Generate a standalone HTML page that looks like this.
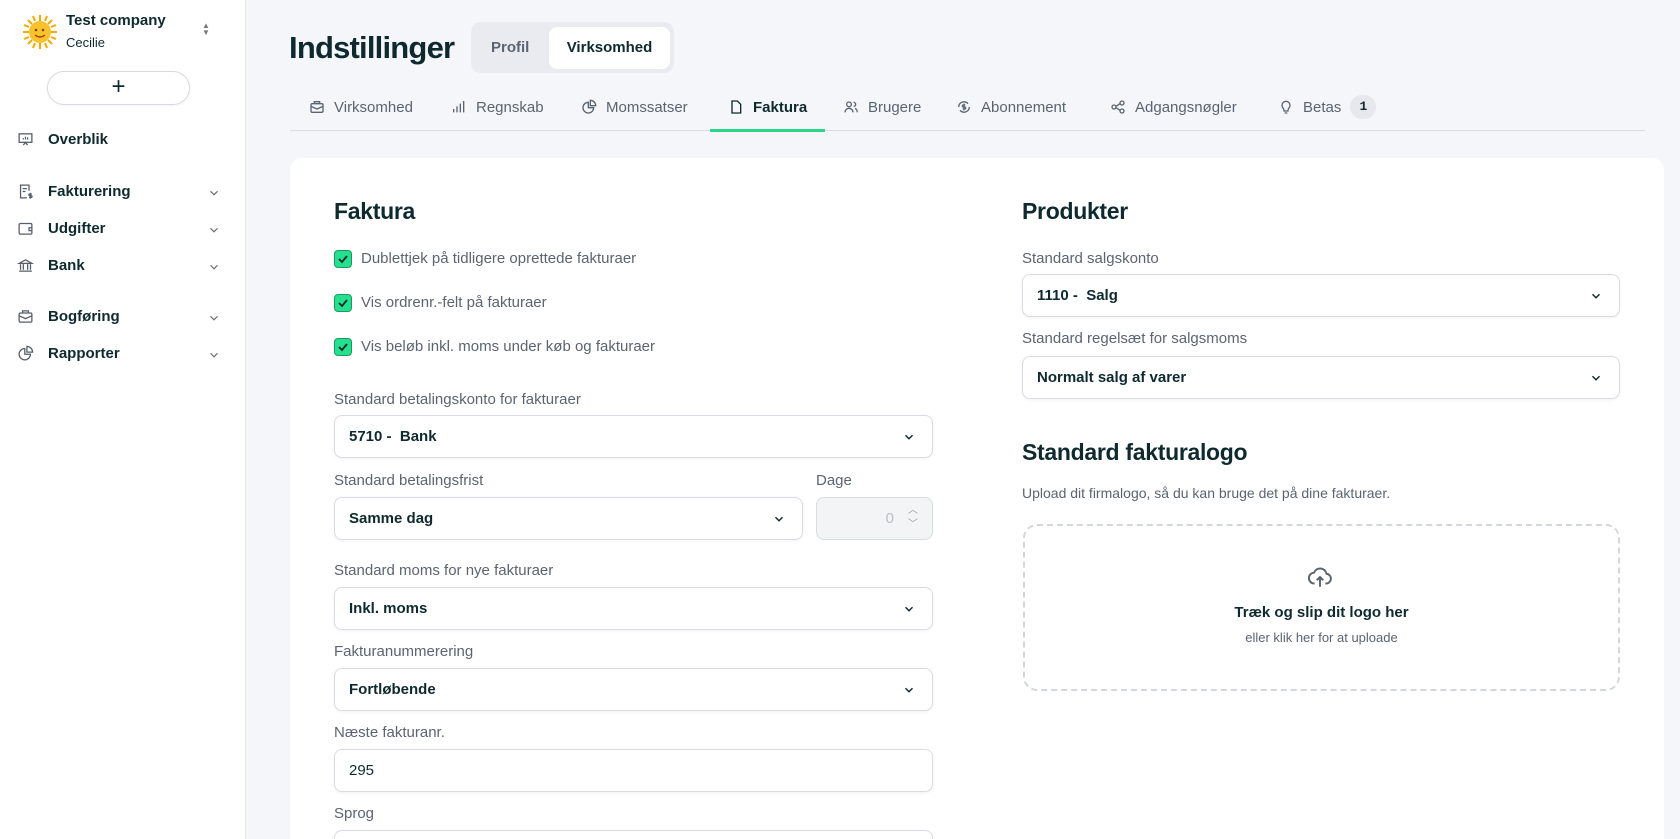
<!DOCTYPE html>
<html><head><meta charset="utf-8"><style>
*{box-sizing:border-box;margin:0;padding:0}
html,body{width:1680px;height:839px;overflow:hidden}
body{background:#f5f6f9;font-family:"Liberation Sans",sans-serif;color:#0e2a2f}
#wrap{position:relative;width:1680px;height:839px;overflow:hidden}
.abs{position:absolute}
.side{left:0;top:0;width:246px;height:839px;background:#fff;border-right:1px solid #e6e8ee}
.nav{position:absolute;left:48px;font-weight:bold;font-size:15px;white-space:nowrap}
.nicon{position:absolute;left:17px;width:17px;height:17px}
.chev{position:absolute;left:207px;width:14px;height:14px}
.tab{position:absolute;top:95px;height:24px;font-size:15px;color:#5a6470;white-space:nowrap;display:flex;align-items:center;gap:9px}
.tab svg{width:16px;height:16px}
.card{left:290px;top:158px;width:1374px;height:720px;background:#fff;border-radius:12px}
.h2{position:absolute;font-size:23px;font-weight:bold;letter-spacing:-0.3px}
.lbl{position:absolute;font-size:15px;color:#5b6470;white-space:nowrap}
.sel{position:absolute;height:43px;border:1px solid #d9dce2;border-radius:8px;box-shadow:0 1px 3px rgba(0,0,0,.06);font-size:15px;font-weight:bold;padding:0 14px;display:flex;align-items:center;background:#fff}
.sel svg{position:absolute;right:16px;top:14px;width:14px;height:14px}
.cb{position:absolute;left:334px;width:18px;height:18px;background:#25e08f;border:1px solid #1a9a62;border-radius:4px}
.cb svg{position:absolute;left:2px;top:2px;width:12px;height:12px}
.cbl{position:absolute;left:361px;font-size:15px;color:#5b6470;white-space:nowrap}
</style></head><body><div id="wrap">
<div class="abs side"></div>
<svg class="abs" style="left:22px;top:14px" width="36" height="36" viewBox="0 0 36 36"><g stroke="#f2a900" stroke-width="2"><path d="M18 1v6M18 29v6M1 18h6M29 18h6M6 6l4 4M26 26l4 4M30 6l-4 4M6 30l4-4M11 2l2 5M25 2l-2 5M11 34l2-5M25 34l-2-5M2 11l5 2M34 11l-5 2M2 25l5-2M34 25l-5-2"/></g><circle cx="18" cy="18" r="11" fill="#f7c22c"/><circle cx="14" cy="16" r="1.3" fill="#7a4a00"/><circle cx="21" cy="16" r="1.3" fill="#7a4a00"/><path d="M13 21q5 4 10 0" stroke="#a0400a" stroke-width="1.4" fill="none"/></svg>
<div class="abs" style="left:66px;top:12px;font-weight:bold;font-size:15px">Test company</div>
<div class="abs" style="left:66px;top:35px;font-size:13px">Cecilie</div>
<div class="abs" style="left:202px;top:22px;font-size:8px;color:#777;line-height:7px">▲<br>▼</div>
<div class="abs" style="left:47px;top:71px;width:143px;height:34px;border:1px solid #d6d9df;border-radius:17px;box-shadow:0 1px 2px rgba(0,0,0,.05);text-align:center;font-size:24px;line-height:30px;font-weight:300">+</div>

<svg class="nicon" style="top:131px" viewBox="0 0 24 24" fill="none" stroke="#555e6a" stroke-width="1.8"><rect x="3" y="4" width="18" height="12"/><path d="M9 20l3-4 3 4M9 12v-2M12 12V8M15 12v-3"/></svg>
<div class="nav" style="top:131px">Overblik</div>
<svg class="nicon" style="top:183px" viewBox="0 0 24 24" fill="none" stroke="#555e6a" stroke-width="1.8"><path d="M14 21H5V3h12v8M8 8h6M8 12h4"/><path d="M19 14v8M21 15.5h-3a1.2 1.2 0 000 2.5h2a1.2 1.2 0 010 2.5h-3"/></svg>
<div class="nav" style="top:183px">Fakturering</div>
<svg class="nicon" style="top:220px" viewBox="0 0 24 24" fill="none" stroke="#555e6a" stroke-width="1.8"><rect x="3" y="5" width="18" height="15" rx="2"/><path d="M21 11h-4v4h4"/></svg>
<div class="nav" style="top:220px">Udgifter</div>
<svg class="nicon" style="top:257px" viewBox="0 0 24 24" fill="none" stroke="#555e6a" stroke-width="1.8"><path d="M3 9l9-5 9 5H3zM5 10v8M9 10v8M15 10v8M19 10v8M3 20h18"/></svg>
<div class="nav" style="top:257px">Bank</div>
<svg class="nicon" style="top:308px" viewBox="0 0 24 24" fill="none" stroke="#555e6a" stroke-width="1.8"><rect x="3" y="7" width="18" height="13" rx="2"/><path d="M8 7V4h8v3M3 11l9 4 9-4"/></svg>
<div class="nav" style="top:308px">Bogføring</div>
<svg class="nicon" style="top:345px" viewBox="0 0 24 24" fill="none" stroke="#555e6a" stroke-width="1.8"><path d="M11 5a8 8 0 108 8h-8z"/><path d="M14 2a8 8 0 018 8h-8z"/></svg>
<div class="nav" style="top:345px">Rapporter</div>
<svg class="chev" style="top:186px" viewBox="0 0 24 24" fill="none" stroke="#666" stroke-width="2"><path d="M6 9l6 6 6-6"/></svg>
<svg class="chev" style="top:223px" viewBox="0 0 24 24" fill="none" stroke="#666" stroke-width="2"><path d="M6 9l6 6 6-6"/></svg>
<svg class="chev" style="top:260px" viewBox="0 0 24 24" fill="none" stroke="#666" stroke-width="2"><path d="M6 9l6 6 6-6"/></svg>
<svg class="chev" style="top:311px" viewBox="0 0 24 24" fill="none" stroke="#666" stroke-width="2"><path d="M6 9l6 6 6-6"/></svg>
<svg class="chev" style="top:348px" viewBox="0 0 24 24" fill="none" stroke="#666" stroke-width="2"><path d="M6 9l6 6 6-6"/></svg>

<div class="abs" style="left:289px;top:30px;font-size:31px;font-weight:bold;letter-spacing:-0.8px">Indstillinger</div>
<div class="abs" style="left:471px;top:22px;width:203px;height:51px;background:#e9ebf0;border-radius:10px"></div>
<div class="abs" style="left:491px;top:39px;font-size:15px;font-weight:bold;color:#5b6470">Profil</div>
<div class="abs" style="left:549px;top:27px;width:121px;height:42px;background:#fff;border-radius:8px;font-size:15px;font-weight:bold;text-align:center;line-height:42px">Virksomhed</div>

<div class="tab" style="left:309px"><svg viewBox="0 0 24 24" fill="none" stroke="#5a6470" stroke-width="2"><rect x="3" y="7" width="18" height="13" rx="2"/><path d="M8 7V4h8v3M3 11l9 4 9-4"/></svg>Virksomhed</div>
<div class="tab" style="left:451px"><svg viewBox="0 0 24 24" fill="none" stroke="#5a6470" stroke-width="2"><path d="M4 20v-5M9 20v-9M14 20V7M19 20V3"/></svg>Regnskab</div>
<div class="tab" style="left:581px"><svg viewBox="0 0 24 24" fill="none" stroke="#5a6470" stroke-width="2"><path d="M11 5a8 8 0 108 8h-8z"/><path d="M14 2a8 8 0 018 8h-8z"/></svg>Momssatser</div>
<div class="tab" style="left:728px;color:#0e2a2f;font-weight:bold"><svg viewBox="0 0 24 24" fill="none" stroke="#0e2a2f" stroke-width="2"><path d="M6 3h8l5 5v13H6z"/></svg>Faktura</div>
<div class="tab" style="left:843px"><svg viewBox="0 0 24 24" fill="none" stroke="#5a6470" stroke-width="2"><circle cx="9" cy="8" r="3.5"/><path d="M3 20a6 6 0 0112 0M16 5a3 3 0 010 6M18 14a5 5 0 013 6"/></svg>Brugere</div>
<div class="tab" style="left:956px"><svg viewBox="0 0 24 24" fill="none" stroke="#5a6470" stroke-width="2"><path d="M4 12a8 8 0 0114-5M20 12a8 8 0 01-14 5"/><path d="M14 9h-3a1.5 1.5 0 000 3h2a1.5 1.5 0 010 3h-3M12 7v10"/></svg>Abonnement</div>
<div class="tab" style="left:1110px"><svg viewBox="0 0 24 24" fill="none" stroke="#5a6470" stroke-width="2"><circle cx="6" cy="12" r="3"/><circle cx="18" cy="6" r="3"/><circle cx="18" cy="18" r="3"/><path d="M9 11l6-4M9 13l6 4"/></svg>Adgangsnøgler</div>
<div class="tab" style="left:1278px"><svg viewBox="0 0 24 24" fill="none" stroke="#5a6470" stroke-width="2"><path d="M9 18h6M10 21h4M8 14a6 6 0 118 0c-1 1-1 2-1 4H9c0-2 0-3-1-4z"/></svg>Betas<span style="display:inline-block;width:26px;height:24px;border-radius:12px;background:#e6e8ed;text-align:center;line-height:24px;font-size:13px;font-weight:bold;color:#0e2a2f;font-family:'Liberation Mono',monospace">1</span></div>
<div class="abs" style="left:290px;top:130px;width:1355px;height:1px;background:#d9dce2"></div>
<div class="abs" style="left:710px;top:129px;width:115px;height:3px;background:#2bd58a"></div>

<div class="abs card"></div>
<div class="h2" style="left:334px;top:198px">Faktura</div>
<div class="cb" style="top:250px"><svg viewBox="0 0 12 12" fill="none" stroke="#0e2a2f" stroke-width="1.8"><path d="M2 6l3 3 5-6"/></svg></div>
<div class="cbl" style="top:250px">Dublettjek på tidligere oprettede fakturaer</div>
<div class="cb" style="top:294px"><svg viewBox="0 0 12 12" fill="none" stroke="#0e2a2f" stroke-width="1.8"><path d="M2 6l3 3 5-6"/></svg></div>
<div class="cbl" style="top:294px">Vis ordrenr.-felt på fakturaer</div>
<div class="cb" style="top:338px"><svg viewBox="0 0 12 12" fill="none" stroke="#0e2a2f" stroke-width="1.8"><path d="M2 6l3 3 5-6"/></svg></div>
<div class="cbl" style="top:338px">Vis beløb inkl. moms under køb og fakturaer</div>

<div class="lbl" style="left:334px;top:391px">Standard betalingskonto for fakturaer</div>
<div class="sel" style="left:334px;top:415px;width:599px">5710 -&nbsp; Bank<svg viewBox="0 0 24 24" fill="none" stroke="#0e2a2f" stroke-width="2.5"><path d="M6 9l6 6 6-6"/></svg></div>
<div class="lbl" style="left:334px;top:472px">Standard betalingsfrist</div>
<div class="lbl" style="left:816px;top:472px">Dage</div>
<div class="sel" style="left:334px;top:497px;width:469px">Samme dag<svg viewBox="0 0 24 24" fill="none" stroke="#0e2a2f" stroke-width="2.5"><path d="M6 9l6 6 6-6"/></svg></div>
<div class="sel" style="left:816px;top:497px;width:117px;background:#f3f4f6;font-weight:normal;color:#b8bcc4;justify-content:flex-end;padding-right:38px;box-shadow:none">0<span style="position:absolute;right:14px;top:6px;font-size:10px;line-height:14px;color:#999">︿<br>﹀</span></div>
<div class="lbl" style="left:334px;top:562px">Standard moms for nye fakturaer</div>
<div class="sel" style="left:334px;top:587px;width:599px">Inkl. moms<svg viewBox="0 0 24 24" fill="none" stroke="#0e2a2f" stroke-width="2.5"><path d="M6 9l6 6 6-6"/></svg></div>
<div class="lbl" style="left:334px;top:643px">Fakturanummerering</div>
<div class="sel" style="left:334px;top:668px;width:599px">Fortløbende<svg viewBox="0 0 24 24" fill="none" stroke="#0e2a2f" stroke-width="2.5"><path d="M6 9l6 6 6-6"/></svg></div>
<div class="lbl" style="left:334px;top:724px">Næste fakturanr.</div>
<div class="sel" style="left:334px;top:749px;width:599px;font-weight:normal">295</div>
<div class="lbl" style="left:334px;top:805px">Sprog</div>
<div class="sel" style="left:334px;top:830px;width:599px"></div>

<div class="h2" style="left:1022px;top:198px">Produkter</div>
<div class="lbl" style="left:1022px;top:250px">Standard salgskonto</div>
<div class="sel" style="left:1022px;top:274px;width:598px">1110 -&nbsp; Salg<svg viewBox="0 0 24 24" fill="none" stroke="#0e2a2f" stroke-width="2.5"><path d="M6 9l6 6 6-6"/></svg></div>
<div class="lbl" style="left:1022px;top:330px">Standard regelsæt for salgsmoms</div>
<div class="sel" style="left:1022px;top:356px;width:598px">Normalt salg af varer<svg viewBox="0 0 24 24" fill="none" stroke="#0e2a2f" stroke-width="2.5"><path d="M6 9l6 6 6-6"/></svg></div>
<div class="h2" style="left:1022px;top:439px">Standard fakturalogo</div>
<div class="lbl" style="left:1022px;top:485px;font-size:14px">Upload dit firmalogo, så du kan bruge det på dine fakturaer.</div>
<div class="abs" style="left:1023px;top:524px;width:597px;height:167px;border:2px dashed #d3d6dc;border-radius:14px"></div>
<svg class="abs" style="left:1307px;top:564px" width="26" height="26" viewBox="0 0 24 24" fill="none" stroke="#5a6470" stroke-width="1.8"><path d="M7 18a5 5 0 01-.5-10A6 6 0 0118 9a4.5 4.5 0 01-1 9"/><path d="M12 21v-9M9 15l3-3 3 3"/></svg>
<div class="abs" style="left:1023px;top:604px;width:597px;text-align:center;font-size:15px;font-weight:bold">Træk og slip dit logo her</div>
<div class="abs" style="left:1023px;top:630px;width:597px;text-align:center;font-size:13px;color:#5b6470">eller klik her for at uploade</div>
</div></body></html>
